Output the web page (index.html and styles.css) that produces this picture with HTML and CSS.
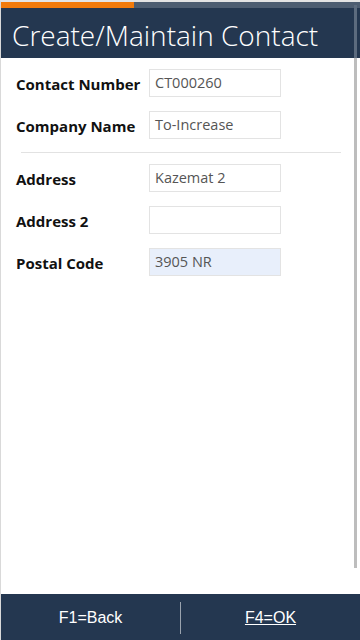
FILE: index.html
```html
<!DOCTYPE html>
<html lang="en">

<head>
    <meta charset="UTF-8">
    <meta name="viewport" content="width=device-width, initial-scale=1.0">
    <title>Create/Maintain Contact</title>
    <link rel="stylesheet" href="styles.css">
</head>

<body>
    <div class="page">
        <div class="progress">
            <span class="done"></span>
            <span class="rest"></span>
        </div>
        <div class="header">Create/Maintain Contact</div>

        <div class="content">
            <div class="row">
                <label>Contact Number</label>
                <div class="field">CT000260</div>
            </div>
            <div class="row">
                <label>Company Name</label>
                <div class="field">To-Increase</div>
            </div>
            <div class="sep"></div>
            <div class="row">
                <label>Address</label>
                <div class="field">Kazemat 2</div>
            </div>
            <div class="row">
                <label>Address 2</label>
                <div class="field"></div>
            </div>
            <div class="row">
                <label>Postal Code</label>
                <div class="field focus">3905 NR</div>
            </div>
        </div>

        <div class="footer">
            <a class="key">F1=Back</a>
            <span class="bar"></span>
            <a class="key ok">F4=OK</a>
        </div>

        <div class="scroll"></div>
    </div>
</body>

</html>
```

FILE: styles.css
```css
* {
    padding: 0;
    margin: 0;
    box-sizing: border-box;
}

body {
    font-family: "Open Sans", sans-serif;
    background: #fff;
}

.page {
    position: relative;
    width: 360px;
    height: 640px;
    display: flex;
    flex-direction: column;
    border-left: 1px solid #d9d9d9;
    border-top: 2px solid #e4e4e4;
}

.progress {
    display: flex;
    height: 6px;
}

.progress .done {
    width: 133px;
    background: #f27a0a;
}

.progress .rest {
    flex: 1;
    background: #4d5d71;
}

.header {
    height: 50px;
    background: #243750;
    color: #fff;
    font-size: 28px;
    font-weight: 300;
    line-height: 54px;
    padding-left: 11px;
    white-space: nowrap;
}

.content {
    flex: 1;
    padding: 11px 18px 0 15px;
}

.row {
    display: flex;
    align-items: center;
    height: 28px;
    margin-bottom: 14px;
}

.row label {
    width: 133px;
    font-size: 15px;
    font-weight: 700;
    color: #111;
    padding-top: 1px;
}

.field {
    width: 132px;
    height: 28px;
    border: 1px solid #e3e3e3;
    font-size: 14.5px;
    color: #555;
    line-height: 26px;
    padding-left: 5px;
}

.field.focus {
    background: #e8effb;
}

.sep {
    height: 1px;
    background: #e2e2e2;
    margin: -1px 0 11px 5px;
    width: 320px;
}

.footer {
    height: 46px;
    background: #243750;
    display: flex;
    align-items: center;
    font-family: "Liberation Sans", Arial, sans-serif;
    font-size: 16px;
    color: #fff;
    padding-top: 2px;
}

.footer .key {
    flex: 1;
    text-align: center;
}

.footer .ok {
    text-decoration: underline;
}

.footer .bar {
    width: 1px;
    height: 32px;
    background: #9aa3ae;
}

.scroll {
    position: absolute;
    right: 3px;
    top: 3px;
    width: 3px;
    height: 563px;
    background: linear-gradient(to bottom, #5c6b7e 0 53px, #bdbdbd 53px);
}
```
